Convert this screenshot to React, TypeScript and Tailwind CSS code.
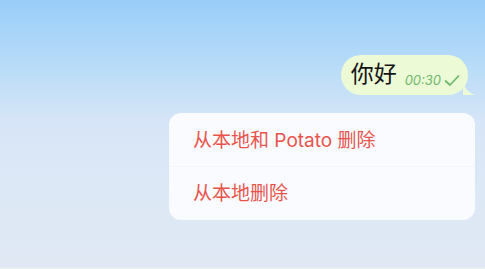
export default function App() {
  return (
    <div
      className="relative flex h-[269px] w-full flex-col items-end overflow-hidden bg-[linear-gradient(180deg,#98cdf9_0%,#b9dcf8_25%,#d6e5f7_45%,#dde8f6_70%,#e0e9f4_100%)] pr-[10px]"
      style={{ fontFamily: 'Inter, "Noto Sans CJK SC", sans-serif' }}
    >
      <div className="relative mt-[55px] mr-[7px] flex h-[40px] items-end rounded-[20px] bg-[#ecfad6] pl-[10px] pr-[8px]">
        <span className="mb-[9px] text-[23px] leading-none text-[#151515]">你好</span>
        <span className="mb-[8px] ml-[8px] flex items-center text-[13px] italic leading-none text-[#6fb86c]">
          00:30
          <svg width="16" height="13" viewBox="0 0 16 13" className="ml-[3px]">
            <path d="M1.5 7 L6 11 L14.5 2" fill="none" stroke="#6fb86c" strokeWidth="1.7" strokeLinecap="round" strokeLinejoin="round" />
          </svg>
        </span>
        <svg width="12" height="14" viewBox="0 0 12 14" className="absolute bottom-0 right-[-7px]">
          <path d="M0 0 C1 6 4 11 12 14 L0 14 Z" fill="#ecfad6" />
        </svg>
      </div>
      <div className="mt-[18px] flex w-[306px] flex-col rounded-[12px] bg-[#f9fbfe] text-[19px] leading-none text-[#e8544c]">
        <div className="flex h-[54px] items-center border-b border-[#f3f5f9] pl-[24px] pt-[1px]">从本地和 Potato 删除</div>
        <div className="flex h-[53px] items-center pl-[24px]">从本地删除</div>
      </div>
      <div className="absolute bottom-0 left-0 h-[2px] w-full bg-[#e9eef3]" />
    </div>
  );
}
